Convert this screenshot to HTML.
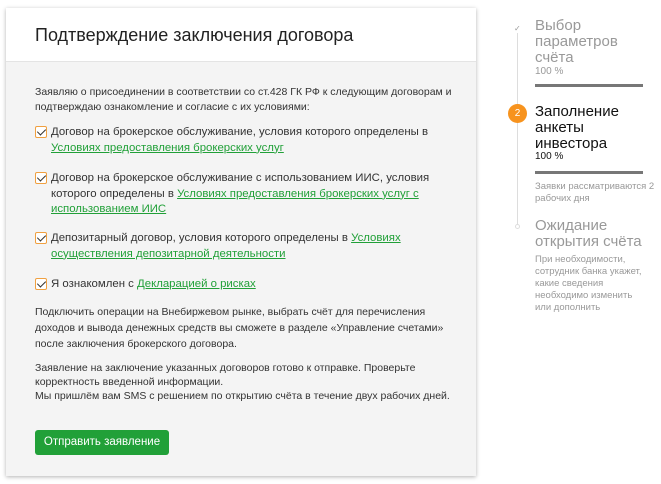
<!DOCTYPE html>
<html><head><meta charset="utf-8"><style>
*{margin:0;padding:0;box-sizing:border-box}
body{width:661px;height:484px;background:#fff;font-family:"Liberation Sans",Arial,sans-serif;position:relative;overflow:hidden;color:#333}
.card{position:absolute;left:6px;top:8px;width:470px;height:468px;background:#f4f4f4;box-shadow:0 1px 4px rgba(0,0,0,.3)}
.hdr{height:54px;background:#fff;border-bottom:1px solid #e4e4e4;padding:17px 0 0 29px;font-size:18px;color:#222}
.a{position:absolute;left:29px;font-size:10.5px;line-height:15px;color:#333}
.cb{position:absolute;left:29px;width:12px;height:12px;border:1px solid #f0a040;border-radius:2px;background:#fff}
.cb:after{content:"";position:absolute;left:3px;top:0px;width:4px;height:7px;border:solid #333;border-width:0 1.5px 1.5px 0;transform:rotate(45deg)}
.it{position:absolute;left:45px;font-size:11.4px;line-height:15.5px;color:#333;width:395px}
.it u{color:#21a038;text-decoration:underline}
.btn{position:absolute;left:29px;top:422px;width:134px;height:25px;background:#21a038;border-radius:3px;color:#fff;font-size:11.5px;line-height:25px;text-align:center}
.s{position:absolute;left:535px;color:#999}
.big{font-size:15px;line-height:16px}
.sm{font-size:9.5px;line-height:12px;width:115px}
.bar{position:absolute;left:535px;width:108px;height:3px;background:#777}
</style></head><body>
<div class="card">
<div class="hdr">Подтверждение заключения договора</div>
<div class="a" style="top:77px;width:435px">Заявляю о присоединении в соответствии со ст.428 ГК РФ к следующим договорам и подтверждаю ознакомление и согласие с их условиями:</div>
<div class="cb" style="top:118px"></div>
<div class="it" style="top:117px">Договор на брокерское обслуживание, условия которого определены в <u>Условиях предоставления брокерских услуг</u></div>
<div class="cb" style="top:164px"></div>
<div class="it" style="top:163px">Договор на брокерское обслуживание с использованием ИИС, условия которого определены в <u>Условиях предоставления брокерских услуг с использованием ИИС</u></div>
<div class="cb" style="top:224px"></div>
<div class="it" style="top:223px">Депозитарный договор, условия которого определены в <u>Условиях осуществления депозитарной деятельности</u></div>
<div class="cb" style="top:270px"></div>
<div class="it" style="top:269px">Я ознакомлен с <u>Декларацией о рисках</u></div>
<div class="a" style="top:296px;width:430px;line-height:16px">Подключить операции на Внебиржевом рынке, выбрать счёт для перечисления доходов и вывода денежных средств вы сможете в разделе «Управление счетами» после заключения брокерского договора.</div>
<div class="a" style="top:353px;width:440px;line-height:14px">Заявление на заключение указанных договоров готово к отправке. Проверьте корректность введенной информации.<br>Мы пришлём вам SMS с решением по открытию счёта в течение двух рабочих дней.</div>
<div class="btn">Отправить заявление</div>
</div>
<div style="position:absolute;left:517px;top:28px;width:1px;height:200px;background:#ddd"></div>
<div style="position:absolute;left:514px;top:24px;font-size:8px;color:#999;background:#fff">✓</div>
<div class="s big" style="top:18px">Выбор<br>параметров<br>счёта</div>
<div class="s" style="top:66px;font-size:10px">100 %</div>
<div class="bar" style="top:84px"></div>
<div style="position:absolute;left:508px;top:104px;width:19px;height:19px;border-radius:50%;background:#f7931e;color:#fff;font-size:10px;line-height:19px;text-align:center">2</div>
<div class="s big" style="top:104px;color:#111">Заполнение<br>анкеты<br>инвестора</div>
<div class="s" style="top:151px;font-size:10px;color:#111">100 %</div>
<div class="bar" style="top:171px"></div>
<div class="s sm" style="top:181px;width:122px">Заявки рассматриваются 2 рабочих дня</div>
<div style="position:absolute;left:515px;top:224px;width:5px;height:5px;border:1px solid #ddd;border-radius:50%;background:#fff"></div>
<div class="s big" style="top:218px">Ожидание<br>открытия счёта</div>
<div class="s sm" style="top:254px">При необходимости, сотрудник банка укажет, какие сведения необходимо изменить или дополнить</div>
</body></html>
